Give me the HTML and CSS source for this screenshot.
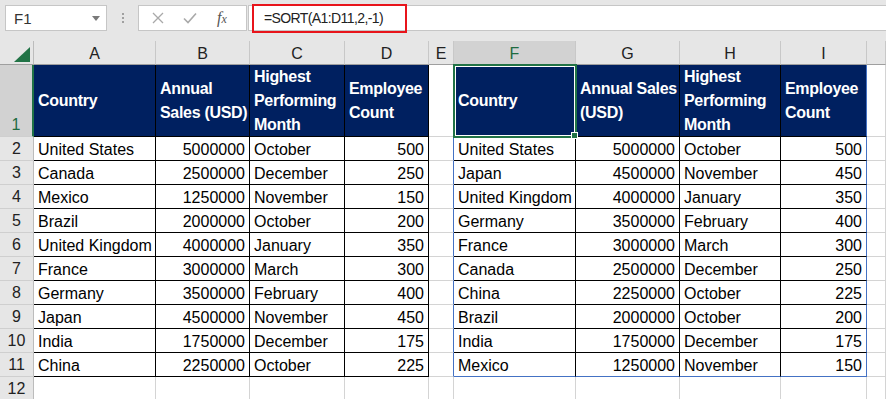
FILE: index.html
```html
<!DOCTYPE html>
<html lang="en">
  <head>
    <meta charset="UTF-8" />
    <meta name="viewport" content="width=device-width, initial-scale=1.0" />
    <title>SORT</title>

    <link rel="stylesheet" href="styles.css">
  </head>
  <body>
    <div id="topbar">
      <div class="namebox">
        <span>F1</span>
        <svg width="8" height="5" viewBox="0 0 8 5"><path d="M0 0h8L4 5z" fill="#7a7a7a" /></svg>
      </div>
      <div class="grip"><i></i><i></i><i></i></div>
      <div class="buttons">
        <svg width="12" height="12" viewBox="0 0 12 12"><path d="M1 1l10 10M11 1L1 11" stroke="#a9a9a9" stroke-width="1.3" fill="none" /></svg>
        <svg width="14" height="12" viewBox="0 0 14 12"><path d="M1 6.5l4 4L13 1.5" stroke="#a9a9a9" stroke-width="1.6" fill="none" /></svg>
        <span class="fx">f<small>x</small></span>
      </div>
      <div class="formulabar">
        <span class="formula">=SORT(A1:D11,2,-1)</span>
      </div>
    </div>

    <div id="sheet" class="sheet"></div>

    <script>
      const left = [
        ["United States", 5000000, "October", 500],
        ["Canada", 2500000, "December", 250],
        ["Mexico", 1250000, "November", 150],
        ["Brazil", 2000000, "October", 200],
        ["United Kingdom", 4000000, "January", 350],
        ["France", 3000000, "March", 300],
        ["Germany", 3500000, "February", 400],
        ["Japan", 4500000, "November", 450],
        ["India", 1750000, "December", 175],
        ["China", 2250000, "October", 225],
      ];

      // SORT(A1:D11,2,-1) -> by sales, descending
      const right = [...left].sort((a, b) => b[1] - a[1]);

      const sheet = document.querySelector("#sheet");
      const cell = (cls, text = "") => `<div class="${cls}">${text}</div>`;

      let html = `<div class="corner"><svg width="16" height="15" viewBox="0 0 16 15"><path d="M16 0v15H0z" fill="#217346" /></svg></div>`;
      ["A", "B", "C", "D", "E", "F", "G", "H", "I", ""].forEach((c) => {
        html += cell(c === "F" ? "ch sel" : "ch", c);
      });

      // row 1: headers
      html += cell("rh sel", "1");
      html += cell("hd", "Country");
      html += cell("hd", "Annual<br>Sales (USD)");
      html += cell("hd", "Highest<br>Performing<br>Month");
      html += cell("hd", "Employee<br>Count");
      html += cell("gap");
      html += cell("hd active", "Country");
      html += cell("hd", "Annual Sales<br>(USD)");
      html += cell("hd", "Highest<br>Performing<br>Month");
      html += cell("hd edge", "Employee<br>Count");
      html += cell("");

      const rowHTML = (row, last, edge = "") =>
        cell("dt" + last, row[0]) +
        cell("dt num" + last, row[1]) +
        cell("dt" + last, row[2]) +
        cell("dt num" + last + edge, row[3]);

      left.forEach((row, i) => {
        const last = i === left.length - 1 ? " last" : "";
        html += cell("rh", i + 2);
        html += rowHTML(row, "");
        html += cell("gap");
        html += rowHTML(right[i], last, " edge");
        html += cell("");
      });

      html += cell("rh", "12");
      for (let i = 0; i < 10; i++) html += cell("");

      sheet.insertAdjacentHTML("beforeend", html);
    </script>
  </body>
</html>
```

FILE: styles.css
```css
body {
  margin: 0;
  width: 886px;
  height: 399px;
  overflow: hidden;
  font-family: "Liberation Sans", Arial, sans-serif;
  font-size: 16px;
  color: #000;
  background: #fff;
}

#topbar {
  display: flex;
  align-items: flex-start;
  height: 41px;
  padding-top: 5px;
  box-sizing: border-box;
  background: #e6e6e6;
}
.namebox {
  display: flex;
  align-items: center;
  justify-content: space-between;
  box-sizing: border-box;
  width: 102px;
  height: 26px;
  margin-left: 5px;
  padding: 0 6px 0 8px;
  background: #fff;
  border: 1px solid #c6c6c6;
  font-size: 15px;
  color: #333;
}
.grip {
  display: flex;
  flex-direction: column;
  align-items: center;
  gap: 2px;
  width: 31px;
  padding-top: 8px;
}
.grip i {
  width: 2px;
  height: 2px;
  background: #a0a0a0;
}
.buttons {
  display: flex;
  align-items: center;
  box-sizing: border-box;
  width: 109px;
  height: 26px;
  padding-left: 13px;
  gap: 19px;
  background: #fff;
  border: 1px solid #c6c6c6;
}
.fx {
  margin-left: 1px;
  font-family: "Liberation Serif", serif;
  font-style: italic;
  font-size: 16px;
  color: #555;
}
.fx small {
  font-size: 12px;
}
.formulabar {
  flex: 1;
  display: flex;
  align-items: center;
  box-sizing: border-box;
  height: 26px;
  margin-left: 1px;
  background: #fff;
  border: 1px solid #c6c6c6;
  border-right: none;
}
.formula {
  box-sizing: border-box;
  height: 29px;
  width: 155px;
  margin-left: 3px;
  padding-left: 10px;
  line-height: 25px;
  border: 2px solid #e8141b;
  font-size: 14px;
  letter-spacing: -0.6px;
  color: #222;
}

.sheet {
  display: grid;
  grid-template-columns: 34px 122px 94px 95px 84px 25px 122px 104px 101px 86px 1fr;
  grid-template-rows: 24px 72px repeat(11, 24px);
}
.sheet > div {
  box-sizing: border-box;
  border-right: 1px solid #d4d4d4;
  border-bottom: 1px solid #d4d4d4;
  padding: 1px 4px 0;
  line-height: 23px;
  white-space: nowrap;
  overflow: hidden;
}

.sheet > .corner {
  display: flex;
  justify-content: flex-end;
  align-items: flex-end;
  padding: 0 3px 2px 0;
  background: #e6e6e6;
  border-right-color: #bcbcbc;
  border-bottom-color: #9f9f9f;
}
.sheet > .ch {
  background: #e6e6e6;
  border-right-color: #c8c8c8;
  border-bottom-color: #9f9f9f;
  text-align: center;
  color: #222;
}
.sheet > .ch.sel {
  background: #d2d2d2;
  color: #1e6b40;
}
.sheet > .rh {
  display: flex;
  align-items: flex-end;
  justify-content: center;
  padding: 0;
  background: #e6e6e6;
  border-right-color: #bcbcbc;
  border-bottom-color: #cfcfcf;
  color: #222;
}
.sheet > .rh.sel {
  background: #d2d2d2;
  color: #1e6b40;
  border-right: 2px solid #217346;
}

.sheet > .hd {
  display: flex;
  align-items: center;
  padding-top: 0;
  background: #002060;
  color: #fff;
  font-weight: bold;
  letter-spacing: -0.3px;
  line-height: 24px;
  border-color: #000;
}
.sheet > .dt {
  border-color: #000;
}
.sheet > .num {
  text-align: right;
}
.sheet > .gap,
.sheet > .edge {
  border-right-color: #4472c4;
}
.sheet > .last {
  border-bottom-color: #4472c4;
}

.sheet > .active {
  position: relative;
  overflow: visible;
  z-index: 1;
}
.active::after {
  content: "";
  position: absolute;
  top: -1px;
  left: -1px;
  right: -2px;
  bottom: -2px;
  border: 2px solid #217346;
  box-shadow: inset 0 0 0 1px #fff;
}
.active::before {
  content: "";
  position: absolute;
  right: -3px;
  bottom: -3px;
  width: 5px;
  height: 5px;
  background: #217346;
  border: 1px solid #fff;
  z-index: 2;
}
```
